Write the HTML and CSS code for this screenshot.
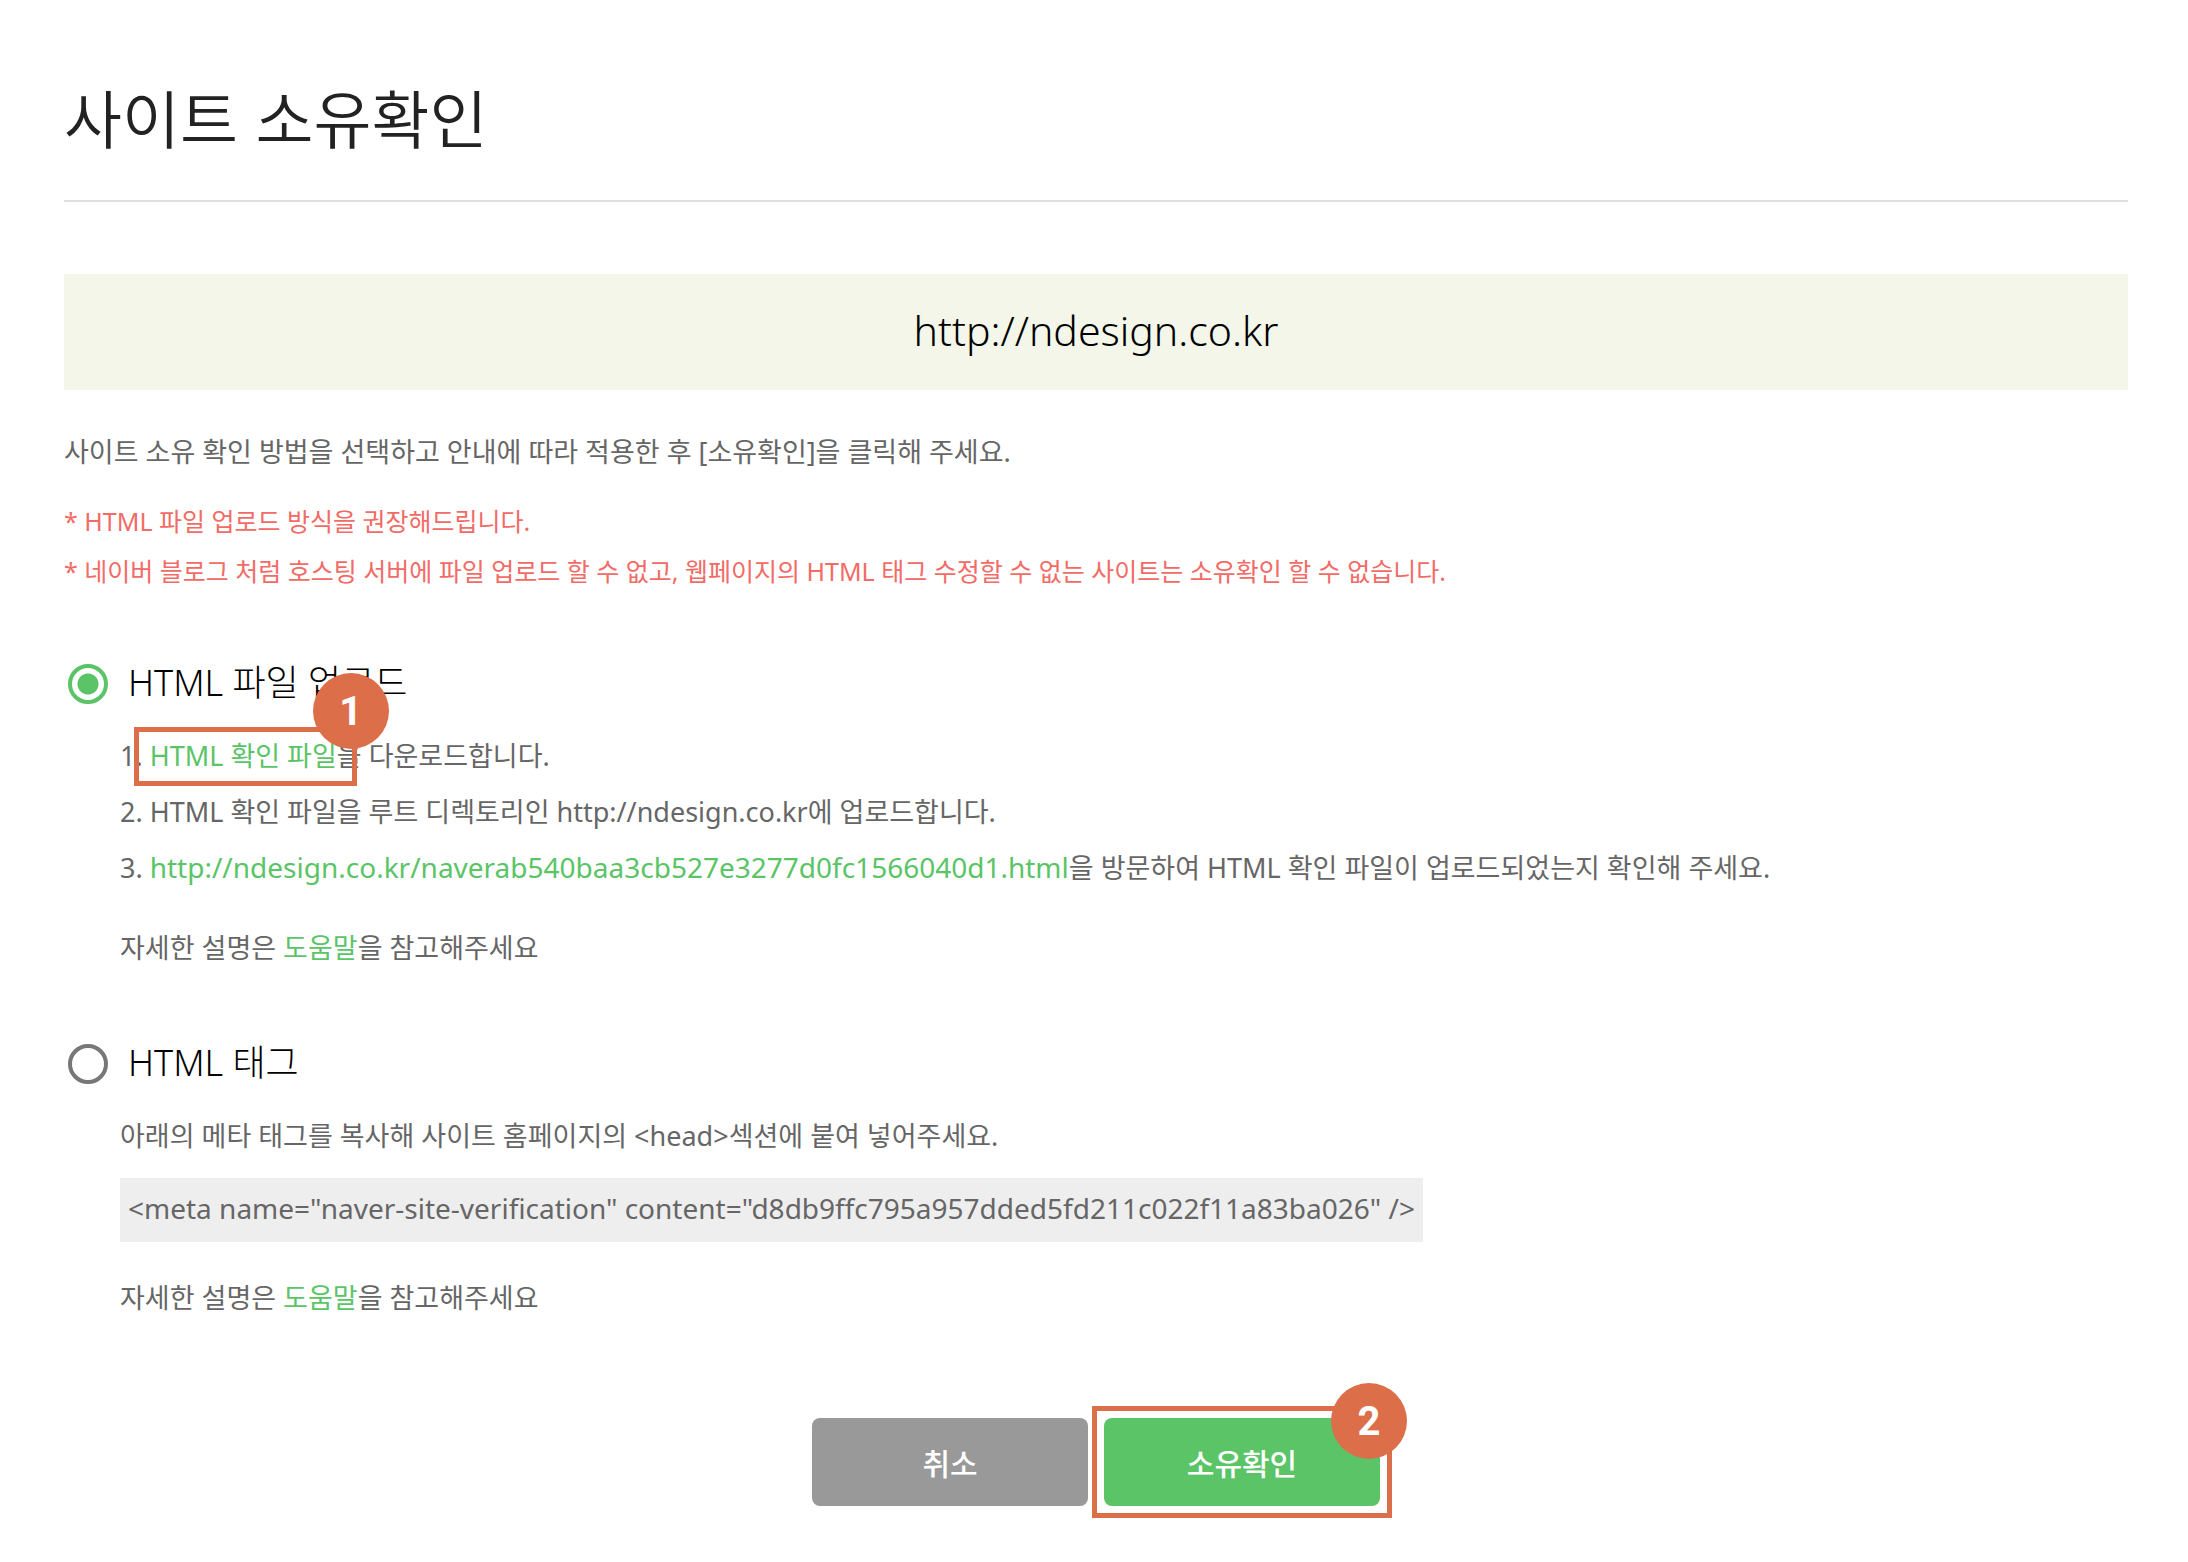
FILE: index.html
```html
<!DOCTYPE html>
<html lang="ko">
<head>
<meta charset="utf-8">
<title>사이트 소유확인</title>
<link rel="stylesheet" href="styles.css">
</head>
<body>
<main class="page">
  <h1 class="title">사이트 소유확인</h1>
  <p class="site">http://ndesign.co.kr</p>
  <p class="intro">사이트 소유 확인 방법을 선택하고 안내에 따라 적용한 후 [소유확인]을 클릭해 주세요.</p>
  <ul class="notes">
    <li>* HTML 파일 업로드 방식을 권장해드립니다.</li>
    <li>* 네이버 블로그 처럼 호스팅 서버에 파일 업로드 할 수 없고, 웹페이지의 HTML 태그 수정할 수 없는 사이트는 소유확인 할 수 없습니다.</li>
  </ul>
  <form class="form">
    <section class="method">
      <label class="choice" for="file"><input class="radio" type="radio" id="file" name="method" checked><span>HTML 파일 업로드</span></label>
      <div class="detail">
        <ol class="steps">
          <li>1. <span class="target"><a href="#file">HTML 확인 파일</a><span class="frame frame-link"></span><span class="badge badge-link">1</span></span>을 다운로드합니다.</li>
          <li>2. HTML 확인 파일을 루트 디렉토리인 http://ndesign.co.kr에 업로드합니다.</li>
          <li>3. <a href="#check" class="url">http://ndesign.co.kr/naverab540baa3cb527e3277d0fc1566040d1.html</a>을 방문하여 HTML 확인 파일이 업로드되었는지 확인해 주세요.</li>
        </ol>
        <p class="help">자세한 설명은 <a href="#help">도움말</a>을 참고해주세요</p>
      </div>
    </section>
    <section class="method">
      <label class="choice" for="tag"><input class="radio" type="radio" id="tag" name="method"><span>HTML 태그</span></label>
      <div class="detail">
        <p class="step">아래의 메타 태그를 복사해 사이트 홈페이지의 &lt;head&gt;섹션에 붙여 넣어주세요.</p>
        <code class="code">&lt;meta name="naver-site-verification" content="d8db9ffc795a957dded5fd211c022f11a83ba026" /&gt;</code>
        <p class="help">자세한 설명은 <a href="#help">도움말</a>을 참고해주세요</p>
      </div>
    </section>
    <div class="actions">
      <button class="button cancel" type="button">취소</button>
      <span class="target"><button class="button confirm" type="button">소유확인</button><span class="frame frame-button"></span><span class="badge badge-button">2</span></span>
    </div>
  </form>
</main>
</body>
</html>
```
FILE: styles.css
```css
* { box-sizing: border-box; }
body { margin: 0; background: #fff; color: #666; font: 27px/56px "Noto Sans", "Noto Sans CJK KR", sans-serif; }
h1, p, ul, ol { margin: 0; padding: 0; list-style: none; }
a { color: #5ac467; text-decoration: none; }
.page { padding: 68px 60px 40px 64px; }
.title { padding-bottom: 36px; border-bottom: 2px solid #e0e0e0; color: #222; font: 350 63px/96px "Noto Sans CJK KR", sans-serif; }
.site { margin-top: 72px; padding-bottom: 4px; background: #f3f6e9; color: #000; font-size: 41px; font-weight: 300; line-height: 112px; text-align: center; }
.intro { margin-top: 34px; }
.notes { margin-top: 16px; color: #f26b66; font-size: 25px; line-height: 50px; }
.method { margin-top: 60px; }
.choice { display: flex; align-items: center; gap: 20px; color: #000; font-size: 36px; font-weight: 300; line-height: 56px; }
.choice span { padding-bottom: 2px; line-height: 54px; }
.radio { appearance: none; width: 40px; height: 40px; margin: 0 0 0 4px; border: 4px solid #777; border-radius: 50%; }
.radio:checked { border-color: #5ac467; background: radial-gradient(circle, #5ac467 10px, transparent 11px); }
.detail { padding: 16px 0 0 56px; }
.help { margin-top: 24px; }
.url { font-size: 28px; line-height: 32px; }
.code { display: block; width: fit-content; margin-top: 14px; padding: 0 8px; background: #eee; font: inherit; font-size: 28px; line-height: 60px; padding-bottom: 4px; }
.code + .help { margin-top: 28px; }
.actions { display: flex; justify-content: center; gap: 16px; margin-top: 92px; }
.target { position: relative; }
.button { display: block; width: 276px; height: 88px; padding: 0; border: 0; border-radius: 8px; color: #fff; font: 500 30px/88px "Noto Sans CJK KR", sans-serif; }
.cancel { background: #999; }
.confirm { background: #5ac467; }
.frame { position: absolute; border: 5px solid #dc6f4a; }
.frame-link { inset: -10px -20px -12px -16px; }
.frame-button { inset: -12px; }
.badge { position: absolute; width: 76px; height: 76px; border-radius: 50%; background: #dc6f4a; color: #fff; font: 700 40px/78px Roboto, sans-serif; text-align: center; }
.badge-link { top: -64px; right: -52px; }
.badge-button { top: -35px; right: -27px; }
```
